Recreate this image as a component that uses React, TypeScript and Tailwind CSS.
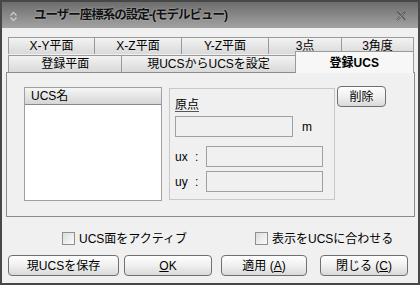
import React from "react";

const font = "font-['Liberation_Sans','Noto_Sans_CJK_JP',sans-serif]";

function Tab({ label, className }: { label: string; className: string }) {
  return (
    <div
      className={`flex h-[17px] items-center justify-center border border-b-0 border-[#9a9a9a] bg-linear-to-b from-[#f3f3f3] to-[#d9d9d9] text-[12px] leading-none text-black -ml-px first:ml-0 ${className}`}
    >
      {label}
    </div>
  );
}

function Btn({ children, className }: { children: React.ReactNode; className: string }) {
  return (
    <button
      className={`flex h-[21px] items-center justify-center rounded-[4px] border border-[#707070] bg-linear-to-b from-[#fefefe] via-[#f0f0f0] to-[#d9d9d9] text-[12px] leading-none text-black ${className}`}
    >
      {children}
    </button>
  );
}

function Check({ label }: { label: string }) {
  return (
    <div className="flex items-center">
      <div className="h-[13px] w-[13px] border border-[#8e8f8f] bg-linear-to-br from-[#dcdcdc] to-[#fbfbfb]" />
      <span className="ml-[4px] text-[12px] leading-none text-black">{label}</span>
    </div>
  );
}

export default function App() {
  return (
    <div className={`flex h-[285px] w-[420px] flex-col bg-[#474747] p-[2px] ${font}`}>
      {/* title bar */}
      <div className="flex h-[26px] items-center bg-linear-to-b from-[#6d6d6d] to-[#a3a3a3] pl-[7px] pr-[12px]">
        <svg width="9" height="11" viewBox="0 0 9 11" className="mt-[2px]">
          <path d="M1.5 4.5 L4.5 1.5 L7.5 4.5" fill="none" stroke="#c9c9c9" strokeWidth="1.4" />
          <path d="M1.5 6.5 L4.5 9.5 L7.5 6.5" fill="none" stroke="#c9c9c9" strokeWidth="1.4" />
        </svg>
        <span className="ml-[16px] text-[12.5px] font-bold leading-none tracking-[-1px] text-[#111] [text-shadow:0_0_2px_rgba(255,255,255,0.5)]">
          ユーザー座標系の設定-(モデルビュー)
        </span>
        <svg width="10" height="10" viewBox="0 0 10 10" className="ml-auto mt-[2px]">
          <path d="M1 1 L9 9 M9 1 L1 9" stroke="#5a5a5a" strokeWidth="1.8" />
          <path d="M1 2 L8 9 M8 2 L1 9" stroke="#b8b8b8" strokeWidth="0.6" />
        </svg>
      </div>

      {/* client area */}
      <div className="flex flex-1 flex-col bg-[#f0f0f0] px-[4px] pt-[9px]">
        <div className="ml-[2px] flex">
          <Tab label="X-Y平面" className="w-[87px]" />
          <Tab label="X-Z平面" className="w-[88px]" />
          <Tab label="Y-Z平面" className="w-[88px]" />
          <Tab label="3点" className="w-[74px]" />
          <Tab label="3角度" className="w-[73px]" />
        </div>
        <div className="relative z-10 ml-[2px] flex items-end">
          <Tab label="登録平面" className="w-[115px]" />
          <Tab label="現UCSからUCSを設定" className="w-[175px]" />
          <div className="-mb-px -ml-px -mt-[3px] flex h-[22px] w-[120px] items-center justify-center border border-b-0 border-[#9a9a9a] bg-[#f7f7f7] text-[12px] font-bold leading-none text-black">
            登録UCS
          </div>
        </div>

        {/* panel */}
        <div className="flex h-[145px] w-[409px] items-start border border-[#8b8b8b] bg-[#f0f0f0] pl-[17px] pt-[13px]">
          <div className="mt-[1px] flex h-[114px] w-[138px] flex-col border border-[#a0a0a0] bg-white">
            <div className="flex h-[17px] items-center border-b border-[#8a8a8a] bg-linear-to-b from-[#f6f6f6] to-[#d6d6d6] pl-[6px] text-[12px] leading-none text-black">
              UCS名
            </div>
          </div>

          <div className="ml-[7px] mt-[2px] flex h-[112px] w-[166px] flex-col border border-[#c8c8c8] pl-[5px] pt-[9px] text-[12px] leading-[14px] text-black">
            <span className="underline decoration-[#555] underline-offset-2">原点</span>
            <div className="mt-[4px] flex items-center">
              <div className="h-[21px] w-[118px] border border-[#a0a0a0] bg-[#f0f0f0]" />
              <span className="ml-[9px]">m</span>
            </div>
            <div className="mt-[9px] flex items-center">
              <span className="flex w-[31px]">
                <span className="w-[20px]">ux</span>
                <span>:</span>
              </span>
              <div className="h-[21px] w-[117px] border border-[#a0a0a0] bg-[#f0f0f0]" />
            </div>
            <div className="mt-[4px] flex items-center">
              <span className="flex w-[31px]">
                <span className="w-[20px]">uy</span>
                <span>:</span>
              </span>
              <div className="h-[21px] w-[117px] border border-[#a0a0a0] bg-[#f0f0f0]" />
            </div>
          </div>

          <Btn className="ml-[2px] w-[49px]">削除</Btn>
        </div>

        {/* checkboxes */}
        <div className="mt-[15px] flex pl-[56px]">
          <div className="w-[193px]">
            <Check label="UCS面をアクティブ" />
          </div>
          <Check label="表示をUCSに合わせる" />
        </div>

        {/* buttons */}
        <div className="ml-[2px] mt-[10px] flex">
          <Btn className="w-[111px]">現UCSを保存</Btn>
          <Btn className="ml-[5px] w-[88px]">
            <span className="underline">O</span>K
          </Btn>
          <Btn className="ml-[9px] w-[86px]">
            適用 (<span className="underline">A</span>)
          </Btn>
          <Btn className="ml-[13px] w-[88px]">
            閉じる (<span className="underline">C</span>)
          </Btn>
        </div>
      </div>
    </div>
  );
}
